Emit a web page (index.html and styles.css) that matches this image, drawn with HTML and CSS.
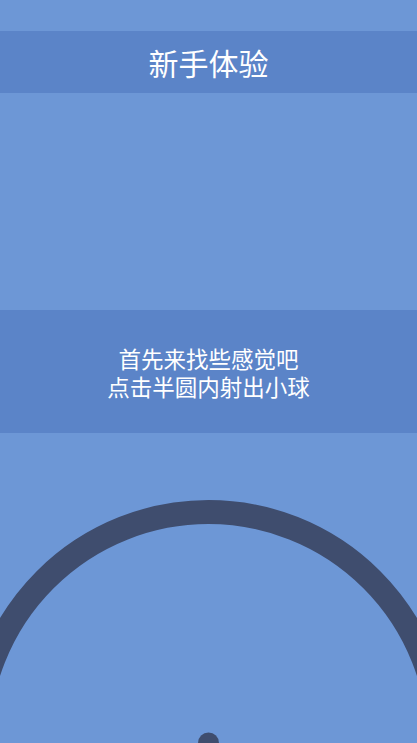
FILE: index.html
```html
<!DOCTYPE html>
<html lang="zh-CN">
<head>
    <meta charset="UTF-8">
    <meta name="viewport" content="width=device-width, initial-scale=1.0">
    <title>新手体验</title>
    <link rel="stylesheet" href="styles.css">
</head>
<body>

    <div class="title-bar">新手体验</div>

    <div class="spacer"></div>

    <div class="tip-bar">
        <p>首先来找些感觉吧</p>
        <p>点击半圆内射出小球</p>
    </div>

    <div class="stage">
        <svg class="arena" width="417" height="310" viewBox="0 0 417 310">
            <circle cx="208.5" cy="310" r="231" fill="none" stroke="#3f4d6e" stroke-width="24"/>
            <circle cx="208.5" cy="310" r="10.5" fill="#3f4d6e"/>
        </svg>
    </div>

</body>
</html>
```

FILE: styles.css
```css
html, body {
    margin: 0;
    padding: 0;
    height: 100%;
}
body {
    font-family: "Noto Sans CJK SC", "Noto Sans", sans-serif;
    background-color: #6d97d6;
    color: #fff;
    overflow: hidden;
}
.title-bar {
    margin-top: 31px;
    height: 62px;
    background-color: #5b84c8;
    display: flex;
    justify-content: center;
    align-items: center;
    font-size: 30px;
    line-height: 40px;
}
.spacer {
    height: 217px;
}
.tip-bar {
    height: 123px;
    background-color: #5b84c8;
    display: flex;
    flex-direction: column;
    justify-content: center;
    align-items: center;
    font-size: 22.5px;
    line-height: 28px;
}
.tip-bar p {
    margin: 0;
}
.stage {
    height: 310px;
}
.arena {
    display: block;
}
```
